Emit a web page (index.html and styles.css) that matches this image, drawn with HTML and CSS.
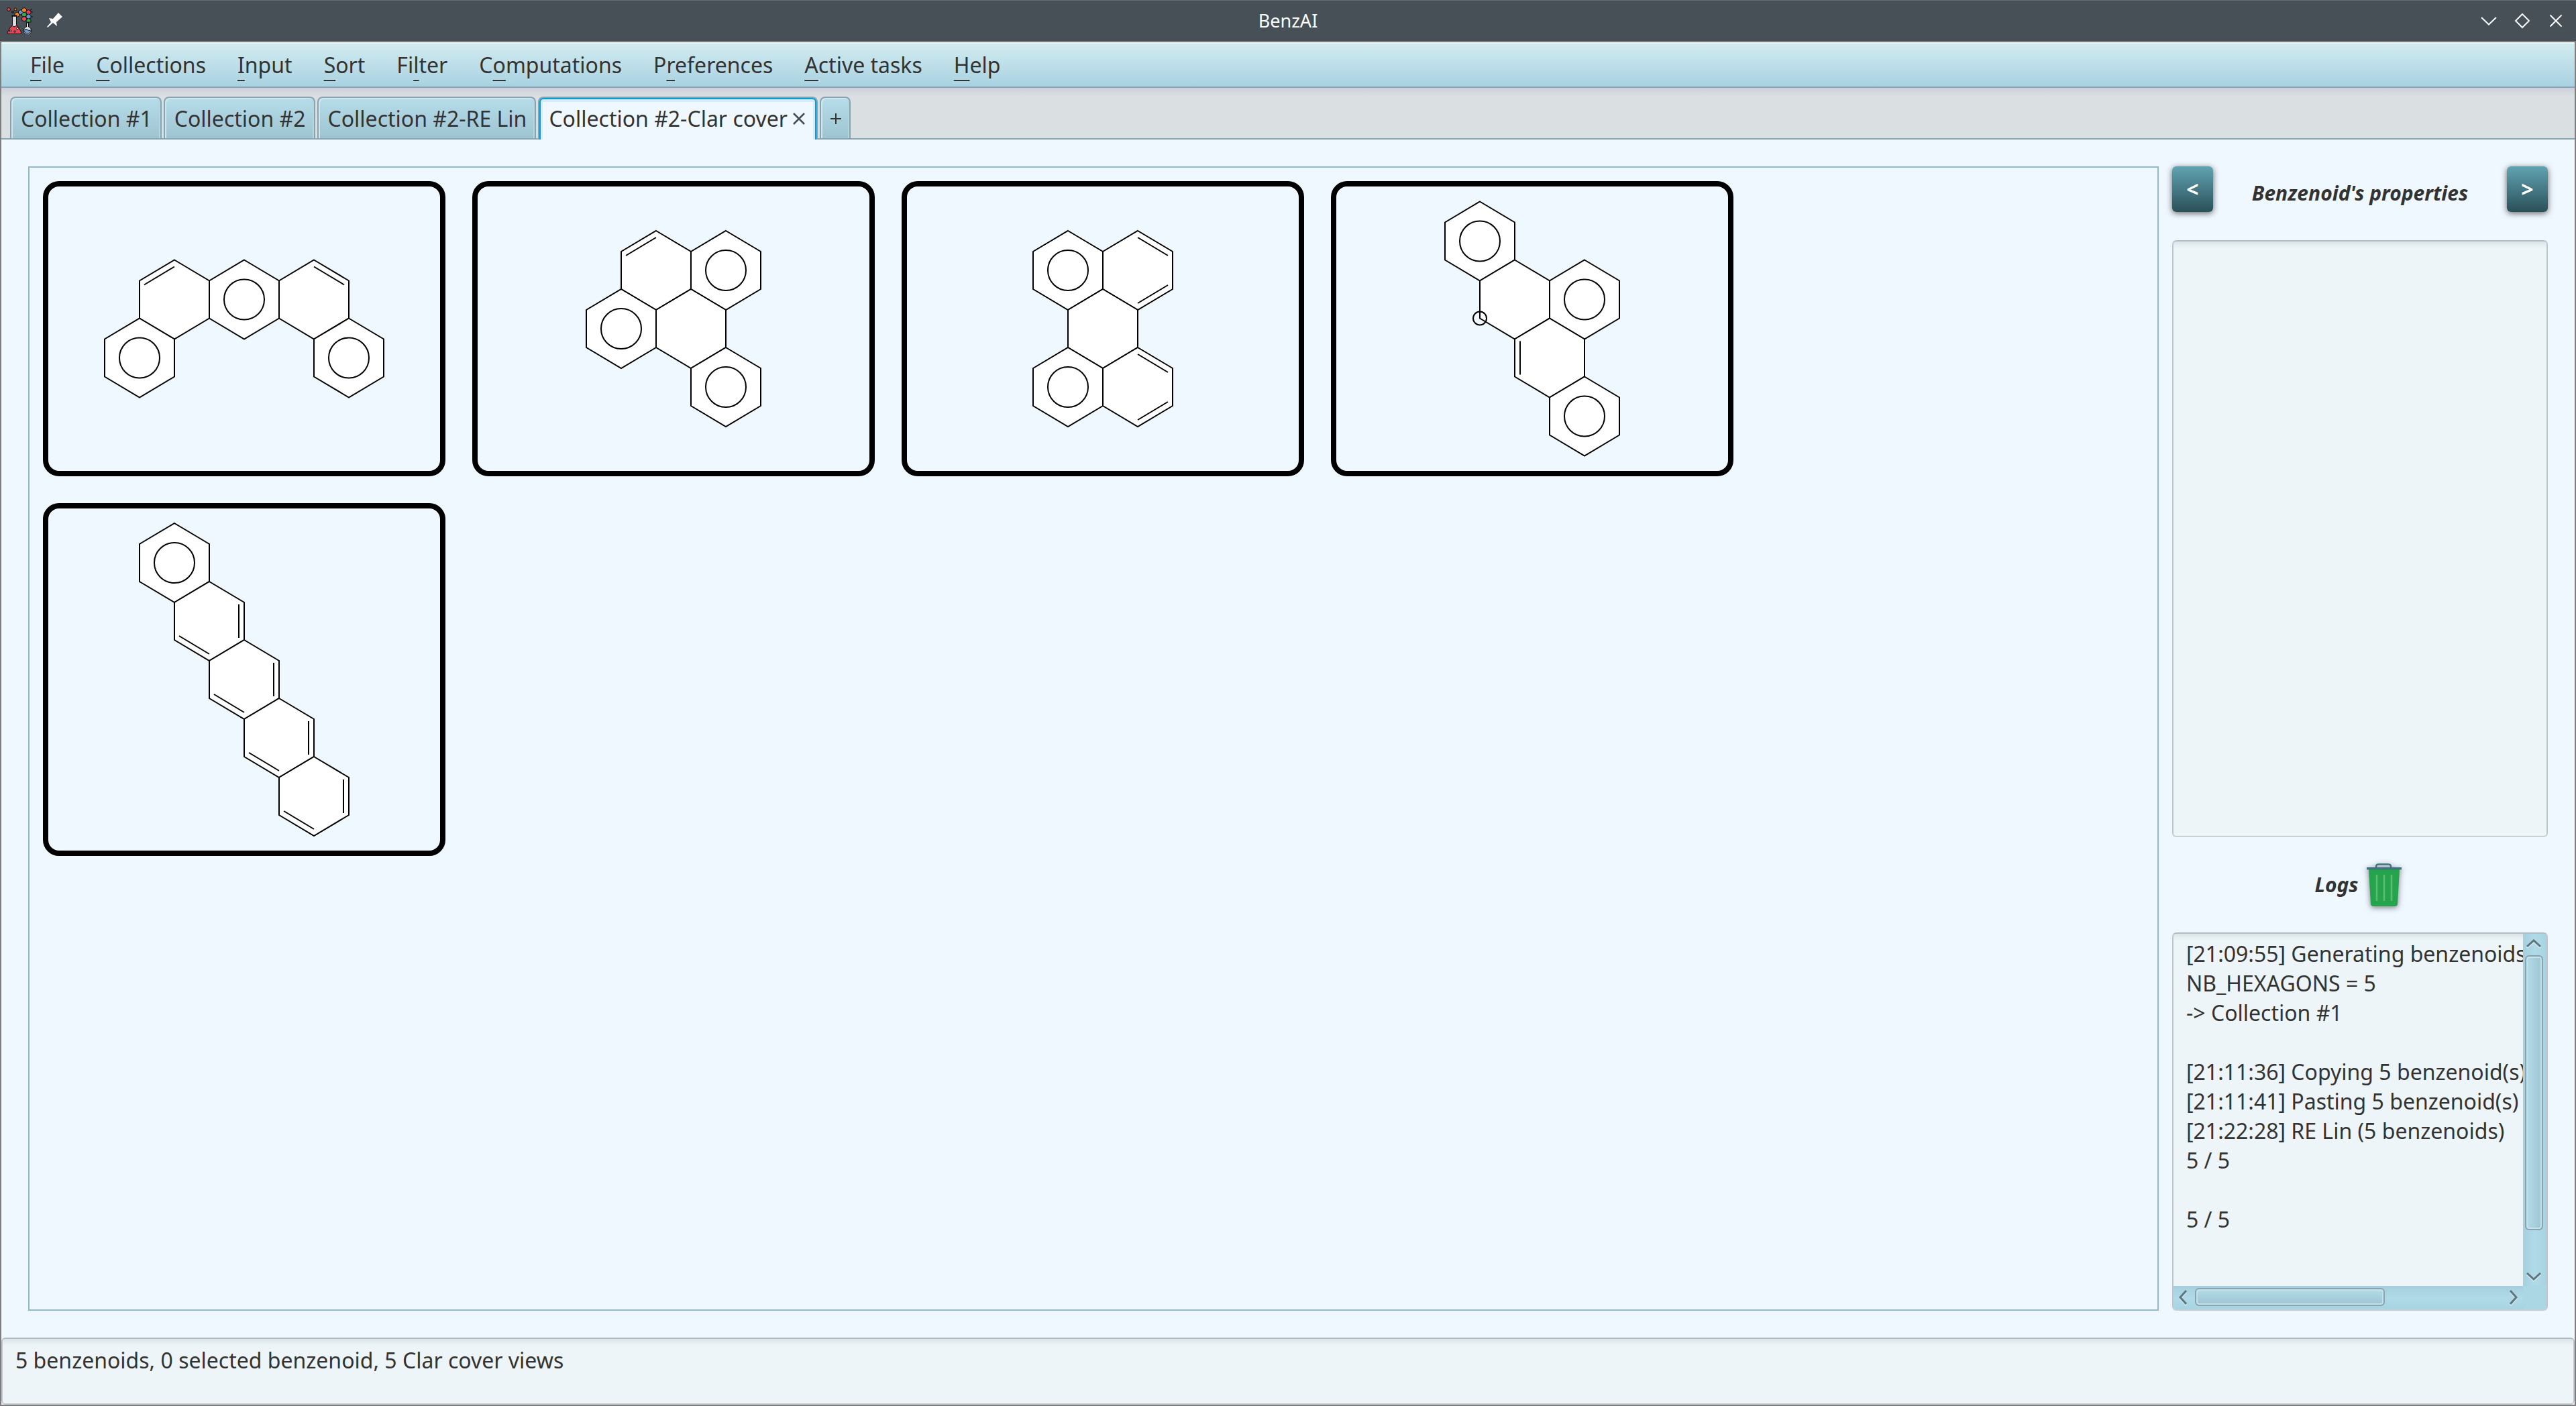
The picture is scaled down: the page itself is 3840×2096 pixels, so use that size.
FILE: index.html
```html
<!DOCTYPE html>
<html lang="en">
<head>
<meta charset="utf-8">
<title>BenzAI</title>
<link rel="stylesheet" href="styles.css">
</head>
<body>
<svg class="defs" aria-hidden="true">
  <defs>
    <path id="hex" class="ring" d="M0-59 52-28V28L0 59-52 28V-28Z"/>
    <circle id="sextet" class="bond" r="30"/>
    <path id="bond-ul" class="bond" d="M-45-22 0-49"/>
    <path id="bond-ur" class="bond" d="M45-22 0-49"/>
    <path id="bond-lr" class="bond" d="M45 22 0 49"/>
    <path id="bond-ll" class="bond" d="M-45 22 0 49"/>
    <path id="bond-l" class="bond" d="M-44-25V25"/>
    <path id="bond-r" class="bond" d="M44-25V25"/>
  </defs>
</svg>

<header class="titlebar">
  <div class="titlebar-side">
    <svg class="logo" viewBox="0 0 40 40" width="40" height="40" aria-hidden="true">
      <g stroke="#111" stroke-width="1">
        <path d="M27 3 33 6 38 2M33 6 39 7M33 14 39 14M25 10 28 17 33 21" fill="none"/>
        <circle cx="3" cy="3" r="2.500" fill="#e04858"/>
        <circle cx="13" cy="3" r="2" fill="#f58220"/>
        <circle cx="9" cy="7" r="1.500" fill="#444"/>
        <path d="M15.500 7l3.500 2v3.500l-3.500 2-3.500-2v-3.500z" fill="#f58220"/>
        <path d="M21 3.500l3.500 2v3.500l-3.500 2-3.500-2v-3.500z" fill="#6f96c8"/>
        <path d="M26 .5l3.500 2v3.500l-3.500 2-3.500-2v-3.500z" fill="#f58220"/>
        <path d="M32.500 3.500l3.500 2v3.500l-3.500 2-3.500-2v-3.500z" fill="#e04858"/>
        <path d="M26 7l3.500 2v3.500l-3.500 2-3.500-2v-3.500z" fill="#35a855"/>
        <path d="M32.500 10l3.500 2v3.500l-3.500 2-3.500-2v-3.500z" fill="#6f96c8"/>
        <path d="M26 13.500l3.500 2v3.500l-3.500 2-3.500-2v-3.500z" fill="#e04858"/>
        <path d="M32.500 16.500l3.500 2v3.500h-7v-3.500z" fill="#35a855"/>
        <path d="M8.500 13v13L1 37.500Q1 39.500 3 39.500H20Q22 39.500 22 37.500L14.500 26V13Z" fill="#d9dce0"/>
        <path d="M6 28.500 1 37.500Q1 39.500 3 39.500H20Q22 39.500 22 37.500L17 28.500 14 27.500 11 29 8.500 27.500Z" fill="#e04858"/>
        <path d="M7.500 12.500H15.500" stroke-width="2"/>
        <path d="M29.500 23V29A6 6 0 1 0 32.500 29V23Z" fill="#d9dce0"/>
        <path d="M25.500 33.500A5.500 5.500 0 0 0 36.500 33.500L33 34.500 29 32.500Z" fill="#6f96c8"/>
      </g>
      <path d="M4.500 34h2v2h-2zM11 35h2v2h-2z" fill="#fff" stroke="#111"/>
      <circle cx="16" cy="31.500" r="1.300" fill="#fff" stroke="#111"/>
    </svg>
    <svg class="pin" viewBox="0 0 24 24" width="24" height="24" aria-hidden="true"><path d="M17 0 23 6 14 14 15 20 9 15 1 22 0 21 6 14 3 8 9 9Z" fill="#fcfcfc"/></svg>
  </div>
  <h1 class="window-title">BenzAI</h1>
  <div class="titlebar-side window-controls">
    <button class="wm-button" type="button" aria-label="Minimize"><svg viewBox="0 0 24 24" width="24" height="24"><path d="M1 7 12 17.500 23 7"/></svg></button>
    <button class="wm-button" type="button" aria-label="Maximize"><svg viewBox="0 0 24 24" width="24" height="24"><path d="M12 2 22 12 12 22 2 12Z"/></svg></button>
    <button class="wm-button" type="button" aria-label="Close"><svg viewBox="0 0 24 24" width="24" height="24"><path d="M3.500 3.500 20.500 20.500M20.500 3.500 3.500 20.500"/></svg></button>
  </div>
</header>

<div class="window">
  <nav class="menubar" aria-label="Main menu">
    <button class="menu" type="button"><u>F</u>ile</button>
    <button class="menu" type="button"><u>C</u>ollections</button>
    <button class="menu" type="button"><u>I</u>nput</button>
    <button class="menu" type="button"><u>S</u>ort</button>
    <button class="menu" type="button">Fi<u>l</u>ter</button>
    <button class="menu" type="button">C<u>o</u>mputations</button>
    <button class="menu" type="button">P<u>r</u>eferences</button>
    <button class="menu" type="button"><u>A</u>ctive tasks</button>
    <button class="menu" type="button"><u>H</u>elp</button>
  </nav>

  <div class="tabs">
    <button class="tab" type="button">Collection #1</button>
    <button class="tab" type="button">Collection #2</button>
    <button class="tab" type="button">Collection #2-RE Lin</button>
    <div class="tab tab-selected">
      <button class="tab-label" type="button">Collection #2-Clar cover</button>
      <button class="tab-close" type="button" aria-label="Close tab"><svg viewBox="0 0 18 18" width="18" height="18"><path d="M1 1 17 17M17 1 1 17"/></svg></button>
    </div>
    <button class="tab" type="button" aria-label="New tab"><svg class="plus" viewBox="0 0 16 16" width="16" height="16"><path d="M8 0V16M0 8H16"/></svg></button>
  </div>

  <main class="workspace">
    <section class="gallery" aria-label="Benzenoids">
      <div class="card">
        <svg viewBox="8 8 584 424">
          <use href="#hex" x="196" y="176.500"/><use href="#hex" x="300" y="176.500"/><use href="#hex" x="404" y="176.500"/><use href="#hex" x="144" y="263.500"/><use href="#hex" x="456" y="263.500"/>
          <use href="#sextet" x="300" y="176.500"/><use href="#sextet" x="144" y="263.500"/><use href="#sextet" x="456" y="263.500"/>
          <use href="#bond-ul" x="196" y="176.500"/><use href="#bond-ur" x="404" y="176.500"/>
        </svg>
      </div>
      <div class="card">
        <svg viewBox="8 8 584 424">
          <use href="#hex" x="274" y="133"/><use href="#hex" x="378" y="133"/><use href="#hex" x="222" y="220"/><use href="#hex" x="326" y="220"/><use href="#hex" x="378" y="307"/>
          <use href="#sextet" x="378" y="133"/><use href="#sextet" x="222" y="220"/><use href="#sextet" x="378" y="307"/>
          <use href="#bond-ul" x="274" y="133"/>
        </svg>
      </div>
      <div class="card">
        <svg viewBox="8 8 584 424">
          <use href="#hex" x="248" y="133"/><use href="#hex" x="352" y="133"/><use href="#hex" x="300" y="220"/><use href="#hex" x="248" y="307"/><use href="#hex" x="352" y="307"/>
          <use href="#sextet" x="248" y="133"/><use href="#sextet" x="248" y="307"/>
          <use href="#bond-ur" x="352" y="133"/><use href="#bond-lr" x="352" y="133"/><use href="#bond-ur" x="352" y="307"/><use href="#bond-lr" x="352" y="307"/>
        </svg>
      </div>
      <div class="card">
        <svg viewBox="8 8 584 424">
          <use href="#hex" x="222" y="89.500"/><use href="#hex" x="274" y="176.500"/><use href="#hex" x="378" y="176.500"/><use href="#hex" x="326" y="263.500"/><use href="#hex" x="378" y="350.500"/>
          <use href="#sextet" x="222" y="89.500"/><use href="#sextet" x="378" y="176.500"/><use href="#sextet" x="378" y="350.500"/>
          <use href="#bond-l" x="326" y="263.500"/>
          <circle class="bond" cx="222" cy="204.500" r="10"/>
        </svg>
      </div>
      <div class="card">
        <svg viewBox="8 8 584 510">
          <use href="#hex" x="196" y="89"/><use href="#hex" x="248" y="176"/><use href="#hex" x="300" y="263"/><use href="#hex" x="352" y="350"/><use href="#hex" x="404" y="437"/>
          <use href="#sextet" x="196" y="89"/>
          <use href="#bond-r" x="248" y="176"/><use href="#bond-r" x="300" y="263"/><use href="#bond-r" x="352" y="350"/><use href="#bond-r" x="404" y="437"/>
          <use href="#bond-ll" x="248" y="176"/><use href="#bond-ll" x="300" y="263"/><use href="#bond-ll" x="352" y="350"/><use href="#bond-ll" x="404" y="437"/>
        </svg>
      </div>
    </section>

    <aside class="side">
      <div class="side-header">
        <button class="nav-button" type="button">&lt;</button>
        <h2 class="side-title">Benzenoid's properties</h2>
        <button class="nav-button" type="button">&gt;</button>
      </div>
      <div class="field properties"></div>
      <div class="logs-header">
        <label class="side-title" for="log">Logs</label>
        <button class="trash" type="button" aria-label="Clear logs">
          <svg viewBox="0 0 52 64" width="52" height="64">
            <path d="M14 8V5Q14 1.500 18 1.500H32Q36 1.500 36 5V8" fill="none" stroke="#3e7480" stroke-width="2.500"/>
            <path d="M3 9H49L46 60Q46 64 42 64H10Q6 64 6 60Z" fill="#24a44d"/>
            <path d="M0 6H52V9.500H0Z" fill="#3e7480"/>
            <path d="M15 17V56M26 17V56M37 17V56" stroke="#5fbb70" stroke-width="2.500"/>
          </svg>
        </button>
      </div>
      <div class="field log-box">
        <textarea id="log" class="log" readonly wrap="off">[21:09:55] Generating benzenoids
NB_HEXAGONS = 5
-&gt; Collection #1

[21:11:36] Copying 5 benzenoid(s)
[21:11:41] Pasting 5 benzenoid(s)
[21:22:28] RE Lin (5 benzenoids)
5 / 5

5 / 5</textarea>
        <div class="scroll scroll-v">
          <svg class="arrow" viewBox="0 0 22 12" width="22" height="12"><path d="M1 11 11 2 21 11"/></svg>
          <div class="track"><div class="thumb" style="height:89%"></div></div>
          <svg class="arrow" viewBox="0 0 22 12" width="22" height="12"><path d="M1 1 11 10 21 1"/></svg>
        </div>
        <div class="scroll scroll-h">
          <svg class="arrow" viewBox="0 0 12 22" width="12" height="22"><path d="M11 1 2 11 11 21"/></svg>
          <div class="track"><div class="thumb" style="width:62%"></div></div>
          <svg class="arrow" viewBox="0 0 12 22" width="12" height="22"><path d="M1 1 10 11 1 21"/></svg>
        </div>
        <div class="scroll-corner"></div>
      </div>
    </aside>
  </main>

  <footer class="field status">5 benzenoids, 0 selected benzenoid, 5 Clar cover views</footer>
</div>
</body>
</html>
```
FILE: styles.css
```css
:root {
  --text: #333;
  --line: #86a5b0;
  --pane-line: #94b8c4;
  --page: #f0f8ff;
  --field: #edf5f8;
}

* { box-sizing: border-box; }

body {
  margin: 0;
  min-height: 100vh;
  display: flex;
  flex-direction: column;
  font: 32px/44px "Noto Sans", sans-serif;
  color: var(--text);
  background: var(--page);
}

button {
  font: inherit;
  color: inherit;
  background: none;
  border: 0;
  padding: 0;
  margin: 0;
}

.defs { position: absolute; width: 0; height: 0; }

.titlebar {
  height: 61px;
  display: flex;
  align-items: center;
  padding: 0 10px;
  border-top: 1px solid #5b6d7b;
  background: #475057;
  color: #fcfcfc;
}
.titlebar-side { flex: 1 1 0; display: flex; align-items: center; gap: 20px; }
.window-controls { justify-content: flex-end; gap: 26px; }
.wm-button:last-child { margin-right: 8px; }
.window-title { margin: 0; font-size: 27px; font-weight: 400; }
.wm-button { display: flex; }
.wm-button svg { fill: none; stroke: #fcfcfc; stroke-width: 2; }

.window {
  flex: 1;
  display: flex;
  flex-direction: column;
  border: 2px solid #7e7e7e;
}

.menubar {
  height: 68px;
  display: flex;
  align-items: center;
  padding: 0 19px;
  border-top: 2px solid #eef8fa;
  border-bottom: 2px solid var(--line);
  background: linear-gradient(#d2ebf0, #a8d2e1);
}
.menu { padding: 0 23px 0 24px; }
.menu u {
  text-decoration-thickness: 2px;
  text-underline-offset: 10px;
  text-decoration-skip-ink: none;
}

.tabs {
  height: 77px;
  display: flex;
  align-items: flex-end;
  gap: 3px;
  padding: 0 13px;
  border-bottom: 2px solid var(--line);
  background: linear-gradient(#cdd0da, #dadfe2 12px);
}
.tab {
  height: 62px;
  display: flex;
  align-items: center;
  padding: 2px 12px 0 14px;
  border: 2px solid var(--line);
  border-bottom: 0;
  border-radius: 8px 8px 0 0;
  background: linear-gradient(#b5dde9, #9fc4d1);
  box-shadow: inset 2px 2px #cfe6ef, inset -2px 0 #b5d5df;
}
.tab-selected {
  height: 64px;
  margin-bottom: -2px;
  gap: 8px;
  padding: 2px 17px 2px 14px;
  background: var(--page);
  box-shadow: inset 0 2px #039ed3, inset 2px 0 #039ed3, inset -2px 0 #039ed3,
    inset 0 6px #d3edfa, inset 5px 0 #d3edfa, inset -5px 0 #d3edfa;
}
.tab-close { display: flex; }
.tab-close svg { fill: none; stroke: #444e55; stroke-width: 2.5; }
.plus { fill: none; stroke: var(--text); stroke-width: 2; }

.workspace {
  flex: 1;
  display: flex;
  gap: 20px;
  padding: 40px;
}
.gallery {
  flex: 1;
  display: flex;
  flex-wrap: wrap;
  align-items: flex-start;
  align-content: flex-start;
  gap: 40px;
  padding: 20px;
  border: 2px solid var(--pane-line);
}
.card {
  width: 600px;
  border: 8px solid #000;
  border-radius: 24px;
}
.card svg { display: block; width: 100%; }
.ring { fill: #fff; stroke: #000; stroke-width: 2; }
.bond { fill: none; stroke: #000; stroke-width: 2; }

.side { width: 560px; display: flex; flex-direction: column; }
.side-header {
  height: 110px;
  display: flex;
  justify-content: space-between;
  align-items: flex-start;
}
.side-title {
  margin: 0;
  font-size: 30px;
  font-weight: 700;
  font-style: italic;
}
.side-header .side-title { padding-top: 18px; }
.nav-button {
  width: 61px;
  height: 68px;
  border-radius: 6px;
  background: linear-gradient(#61a3b2, #2a5058);
  color: #fff;
  font-weight: 700;
  box-shadow: 0 2px 10px rgba(0, 0, 0, .6);
}

.field {
  border: 2px solid;
  border-color: #b5bbc4 #c0c6cd #c9ced3;
  border-radius: 6px;
  background: linear-gradient(#dbe5e8, var(--field) 10px);
}
.properties { flex: 1; }

.logs-header {
  height: 142px;
  display: flex;
  align-items: center;
  justify-content: center;
  gap: 12px;
  padding-right: 6px;
}
.trash { display: flex; filter: drop-shadow(0 2px 4px rgba(0, 0, 0, .5)); }

.log-box {
  height: 564px;
  display: grid;
  grid-template: 1fr 35px / 1fr 35px;
  overflow: hidden;
}
.log {
  display: block;
  width: 100%;
  height: 100%;
  padding: 8px 0 0 19px;
  border: 0;
  outline: 0;
  resize: none;
  overflow: hidden;
  background: none;
  font: inherit;
  color: inherit;
}
.scroll { display: flex; align-items: center; gap: 12px; }
.scroll-v {
  flex-direction: column;
  padding: 8px 3px 8px 0;
  background: linear-gradient(90deg, #a5cfdc, #b0dae8 50%, #a8d3e0);
}
.scroll-h {
  padding: 0 8px 2px;
  background: linear-gradient(#a5cfdc, #b0dae8 50%, #a8d3e0);
}
.scroll-corner { background: #abd6e4; }
.arrow {
  fill: none;
  stroke: #5f7680;
  stroke-width: 3;
  filter: drop-shadow(0 2px 0 #d0e8f0);
}
.track { flex: 1; }
.thumb {
  border: 2px solid var(--line);
  border-radius: 6px;
  box-shadow: inset 0 0 0 2px #c5e1ea;
}
.scroll-v .thumb { width: 27px; background: linear-gradient(90deg, #b3dbe8, #9fc4d1); }
.scroll-h .thumb { height: 27px; background: linear-gradient(#b3dbe8, #9fc4d1); }

.status { height: 100px; padding: 10px 19px; }
```
